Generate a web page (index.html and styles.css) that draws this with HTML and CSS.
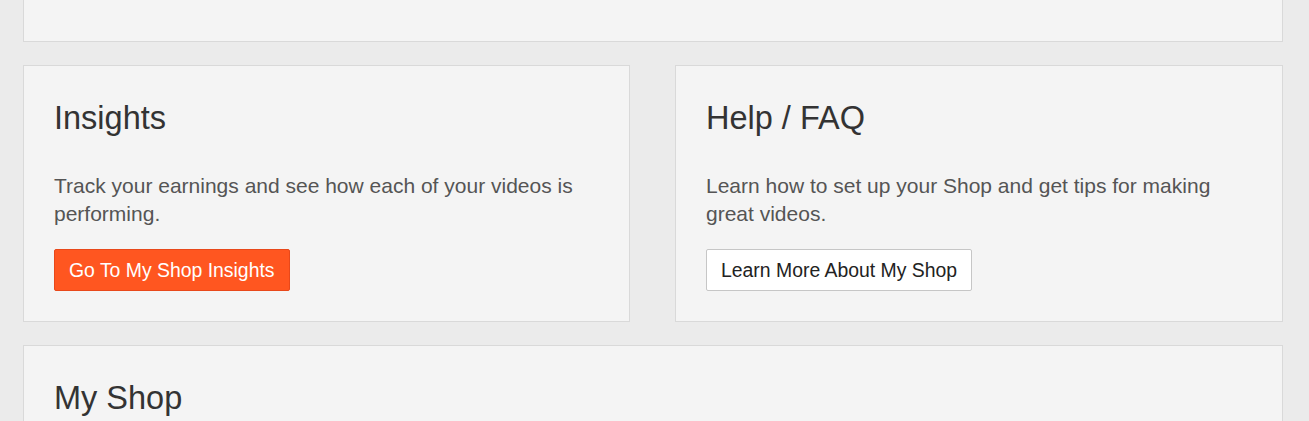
FILE: index.html
```html
<!DOCTYPE html>
<html lang="en">
<head>
<meta charset="utf-8">
<title>My Shop</title>
<link rel="stylesheet" href="styles.css">
</head>
<body>
<div class="page">
  <section class="card card-top"></section>
  <div class="row">
    <section class="card">
      <h2 class="card-title">Insights</h2>
      <p class="card-text">Track your earnings and see how each of your videos is performing.</p>
      <a class="btn btn-primary" href="#">Go To My Shop Insights</a>
    </section>
    <section class="card">
      <h2 class="card-title">Help / FAQ</h2>
      <p class="card-text">Learn how to set up your Shop and get tips for making great videos.</p>
      <a class="btn btn-default" href="#">Learn More About My Shop</a>
    </section>
  </div>
  <section class="card">
    <h2 class="card-title">My Shop</h2>
  </section>
</div>
</body>
</html>
```

FILE: styles.css
```css
html, body {
  margin: 0;
  padding: 0;
  background: #ebebeb;
  font-family: "Liberation Sans", Arial, sans-serif;
  overflow: hidden;
}

.page {
  padding: 0 26px 40px 23px;
  display: flex;
  flex-direction: column;
  gap: 23px;
}

.card {
  background: #f4f4f4;
  border: 1px solid #d9d9d9;
  padding: 35px 30px 30px;
}

.card-top {
  border-top: none;
  padding: 0;
  height: 41px;
}

.row {
  display: grid;
  grid-template-columns: 607fr 608fr;
  gap: 45px;
}

.card-title {
  margin: 0;
  font-size: 32.5px;
  line-height: 35px;
  font-weight: normal;
  color: #333333;
}

.card-text {
  margin: 36px 0 21px;
  font-size: 21px;
  line-height: 28px;
  color: #555555;
}

.btn {
  display: inline-block;
  box-sizing: border-box;
  height: 42px;
  line-height: 40px;
  padding: 0 14px;
  font-size: 19.4px;
  border-radius: 2px;
  text-decoration: none;
}

.btn-primary {
  background: #ff5620;
  border: 1px solid #e8481a;
  color: #ffffff;
}

.btn-default {
  background: #ffffff;
  border: 1px solid #c6c6c6;
  color: #222222;
}
```
